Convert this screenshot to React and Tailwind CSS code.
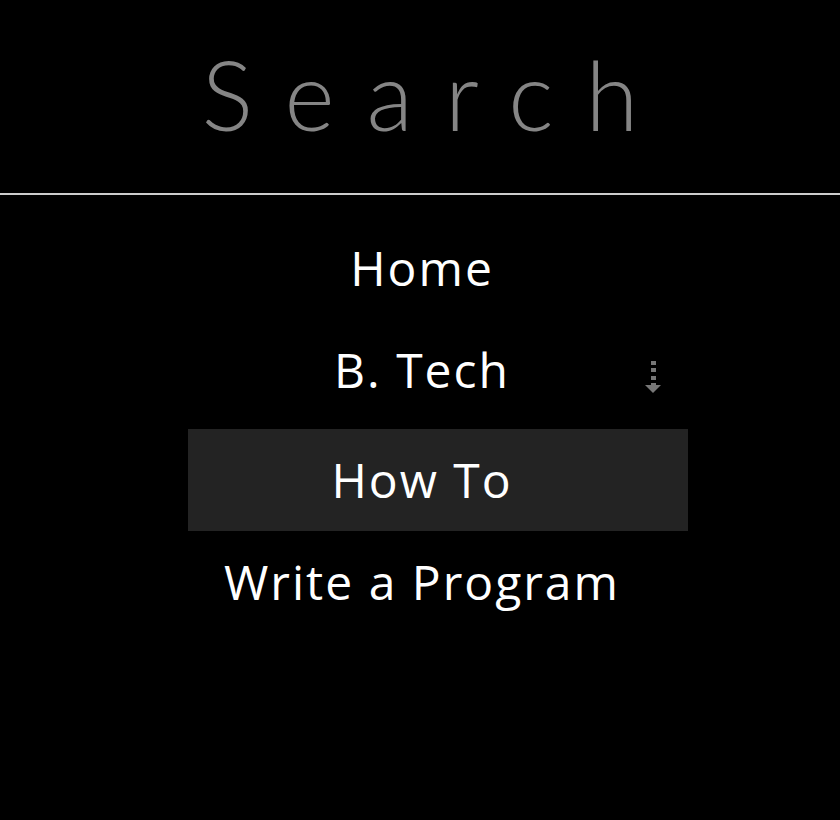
import { useState } from 'react'

function DottedArrow() {
  return (
    <svg width="16" height="34" viewBox="0 0 16 34" className="text-[#777]">
      <rect x="6" y="1" width="5" height="4" fill="currentColor" />
      <rect x="6" y="8" width="5" height="4" fill="currentColor" />
      <rect x="6" y="16" width="5" height="4" fill="currentColor" />
      <rect x="6" y="23" width="5" height="3" fill="currentColor" />
      <path d="M0 25 L16 25 L8 33 Z" fill="currentColor" />
    </svg>
  )
}

const items = ['Home', 'B. Tech', 'How To', 'Write a Program']

export default function App() {
  const [active] = useState('How To')

  return (
    <div className="min-h-[820px] bg-black text-white" style={{ fontFamily: '"Open Sans", sans-serif' }}>
      {/* Title */}
      <div className="h-[193px] flex items-center justify-center">
        <h1
          className="text-[96px] font-light tracking-[32px] text-[#858585] pl-[32px] leading-none -mt-[6px]"
          style={{ fontFamily: 'Lato, sans-serif' }}
        >
          Search
        </h1>
      </div>
      <div className="h-[2px] bg-[#cccccc]" />

      {/* Menu */}
      <ul className="ml-[188px] w-[500px] pt-[22px]">
        {items.map((item) => (
          <li
            key={item}
            className={`relative h-[102px] flex items-center justify-center pr-[32px] text-[48px] tracking-[2px] ${
              item === active ? 'bg-[#232323]' : ''
            } ${item === 'B. Tech' ? 'mb-[8px]' : ''}`}
          >
            {item}
            {item === 'B. Tech' && (
              <span className="absolute left-[457px] top-[41px] leading-none">
                <DottedArrow />
              </span>
            )}
          </li>
        ))}
      </ul>
    </div>
  )
}
